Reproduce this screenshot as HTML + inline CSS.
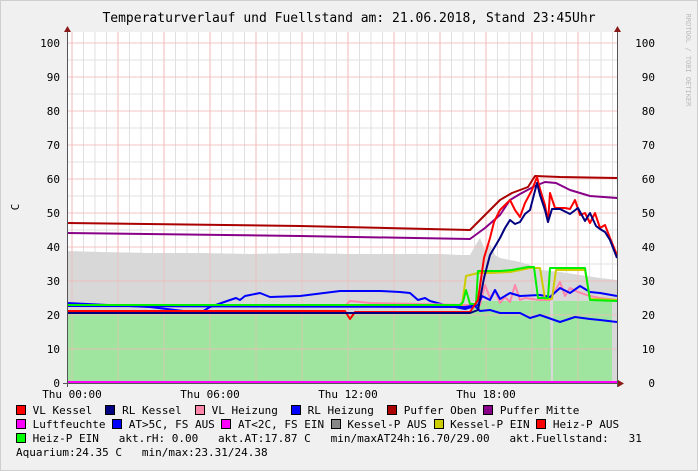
<!DOCTYPE html>
<html><head><meta charset="utf-8"><style>
body{margin:0;width:698px;height:471px;overflow:hidden;background:#f0f0f0;font-family:"DejaVu Sans Mono","Liberation Mono",monospace}
.t{position:absolute;font-size:11px;line-height:14px;color:#000;white-space:pre}
.b{display:inline-block;width:8px;height:8px;border:1px solid #000;vertical-align:-1px}
</style></head><body>
<svg width="698" height="471" style="position:absolute;left:0;top:0" font-family="DejaVu Sans Mono, Liberation Mono, monospace">
<rect x="0" y="0" width="698" height="471" fill="#f0f0f0"/>
<rect x="0.5" y="0.5" width="697" height="470" fill="none" stroke="#cfcfcf"/>
<rect x="67" y="32" width="550" height="351" fill="#fff"/>
<g id="grid"></g>
<polygon fill="#d8d8d8" points="67,383 67,251 100,252 150,253 200,253 250,254 300,253 350,254 400,254 440,254 460,255 470,255 475,246 480,238 485,250 490,244 495,255 500,258 510,260 520,262 530,265 540,270 560,272 580,275 600,278 617,280 617,383"/>
<polygon fill="#9fe59f" points="67,383 67,312 470,312 476,301 550,301 551,383 553,383 553,301 612,301 612,383"/>
<g id="gl"></g>
<g fill="none" stroke-width="2" stroke-linejoin="round">
<polyline stroke="#aa0000" points="67,223 300,226 470,230 485,215 500,200 512,193 528,187 535,176 560,177 617,178"/>
<polyline stroke="#880088" points="67,233 300,236 470,239 485,228 500,215 510,200 520,194 535,186 545,182 556,183 570,190 590,196 617,198"/>
<polyline stroke="#0000ff" points="67,303 150,307 200,313 210,307 230,300 236,298 240,300 245,296 260,293 270,297 300,296 340,291 380,291 400,292 410,293 418,300 425,298 430,301 445,305 465,309 475,306 480,311 490,310 500,313 520,313 530,318 540,315 560,322 575,317 590,319 600,320 617,322"/>
<polyline stroke="#ff88aa" points="67,305 345,306 350,301 370,303 420,304 465,305 480,305 485,285 490,298 495,290 500,303 505,297 510,302 515,285 520,300 525,298 540,300 550,300 560,282 565,296 570,288 578,292 590,296 600,298 617,300"/>
<polyline stroke="#0000ff" points="67,306 465,307 478,305 482,296 490,300 495,290 500,299 510,293 520,296 540,295 550,297 560,288 570,293 580,286 590,292 600,293 617,296"/>
<polyline stroke="#cccc00" points="67,305 462,305 466,276 478,273 490,273 510,272 530,268 540,268 545,299 552,299 556,270 585,270 590,299 617,300"/>
<polyline stroke="#00ee00" points="67,305 460,305 463,302 466,290 470,304 476,304 478,271 500,271 512,270 528,267 534,267 538,298 548,298 550,268 585,268 590,300 617,301"/>
<polyline stroke="#ff0000" points="67,311 345,311 350,319 355,312 470,312 478,300 484,258 490,238 494,222 500,210 505,205 510,200 515,210 520,217 525,203 532,190 537,177 540,189 545,205 548,222 550,193 555,208 565,208 570,209 575,200 580,215 585,213 590,223 595,213 600,228 605,225 610,238 617,255"/>
<polyline stroke="#000080" points="67,313 470,313 478,310 484,278 490,255 500,238 505,228 510,220 515,224 520,222 525,214 530,210 537,183 540,195 545,210 548,222 552,209 560,209 570,214 578,208 585,221 590,213 596,226 600,229 605,232 610,240 617,258"/>
<line x1="67" y1="382" x2="617" y2="382" stroke="#ff00ff" stroke-width="2"/>
</g>
<line x1="67.5" y1="28" x2="67.5" y2="387" stroke="#555"/>
<line x1="617.5" y1="28" x2="617.5" y2="387" stroke="#555"/>
<line x1="63" y1="383.5" x2="622" y2="383.5" stroke="#555"/>
<polygon points="64,32 71,32 67.5,26" fill="#8b1a1a"/>
<polygon points="614,32 621,32 617.5,26" fill="#8b1a1a"/>
<polygon points="618,380 618,387 624,383.5" fill="#8b1a1a"/>
<text x="349" y="22" font-size="13" text-anchor="middle">Temperaturverlauf und Fuellstand am: 21.06.2018, Stand 23:45Uhr</text>
<text transform="translate(19,207) rotate(-90)" font-size="11" text-anchor="middle">C</text>
<text transform="translate(686,60) rotate(90)" font-size="7" fill="#bbb" text-anchor="middle">RRDTOOL / TOBI OETIKER</text>
<g id="lab" font-size="11"></g>
<g font-size="11" text-anchor="middle">
<text x="72" y="398">Thu 00:00</text><text x="210" y="398">Thu 06:00</text><text x="348" y="398">Thu 12:00</text><text x="486" y="398">Thu 18:00</text>
</g>
</svg>
<script>
var g=document.getElementById('grid'),s='',L='';
for(var k=0;k<48;k++){var x=72+k*11.5;if(x>617)break;s+='<line x1="'+x+'" y1="32" x2="'+x+'" y2="383" stroke="'+(k%4==0?'#f2b8b8':'#e0e0e0')+'"/>';}
for(var v=0;v<=100;v+=5){var y=383-3.4*v;if(v%10)s+='<line x1="67" y1="'+y+'" x2="617" y2="'+y+'" stroke="#e0e0e0"/>';}
g.innerHTML=s;
for(var v=10;v<=100;v+=10){var y=383-3.4*v;L+='<line x1="67" y1="'+y+'" x2="617" y2="'+y+'" stroke="#f2b8b8" stroke-opacity="0.8"/>';}
for(var k=0;k<48;k+=4){var x=72+k*11.5;L+='<line x1="'+x+'" y1="32" x2="'+x+'" y2="383" stroke="#f2b8b8" stroke-opacity="0.6"/>';}
document.getElementById('gl').innerHTML=L;
var t='';for(var v=0;v<=100;v+=10){var y=383-3.4*v+4;t+='<text x="60" y="'+y+'" text-anchor="end">'+v+'</text><text x="655" y="'+y+'" text-anchor="end">'+v+'</text>';}
document.getElementById('lab').innerHTML=t;
</script>
<div class="t" style="left:16px;top:404px"><span class="b" style="background:#f00"></span> VL Kessel  <span class="b" style="background:#000080"></span> RL Kessel  <span class="b" style="background:#ff88aa"></span> VL Heizung  <span class="b" style="background:#00f"></span> RL Heizung  <span class="b" style="background:#a00"></span> Puffer Oben <span class="b" style="background:#808"></span> Puffer Mitte</div>
<div class="t" style="left:16px;top:418px"><span class="b" style="background:#f0f"></span> Luftfeuchte <span class="b" style="background:#00f"></span> AT>5C, FS AUS <span class="b" style="background:#f0f"></span> AT<2C, FS EIN <span class="b" style="background:#888"></span> Kessel-P AUS <span class="b" style="background:#cc0"></span> Kessel-P EIN <span class="b" style="background:#f00"></span> Heiz-P AUS</div>
<div class="t" style="left:16px;top:432px"><span class="b" style="background:#0f0"></span> Heiz-P EIN   akt.rH: 0.00   akt.AT:17.87 C   min/maxAT24h:16.70/29.00   akt.Fuellstand:   31</div>
<div class="t" style="left:16px;top:446px">Aquarium:24.35 C   min/max:23.31/24.38</div>
</body></html>
